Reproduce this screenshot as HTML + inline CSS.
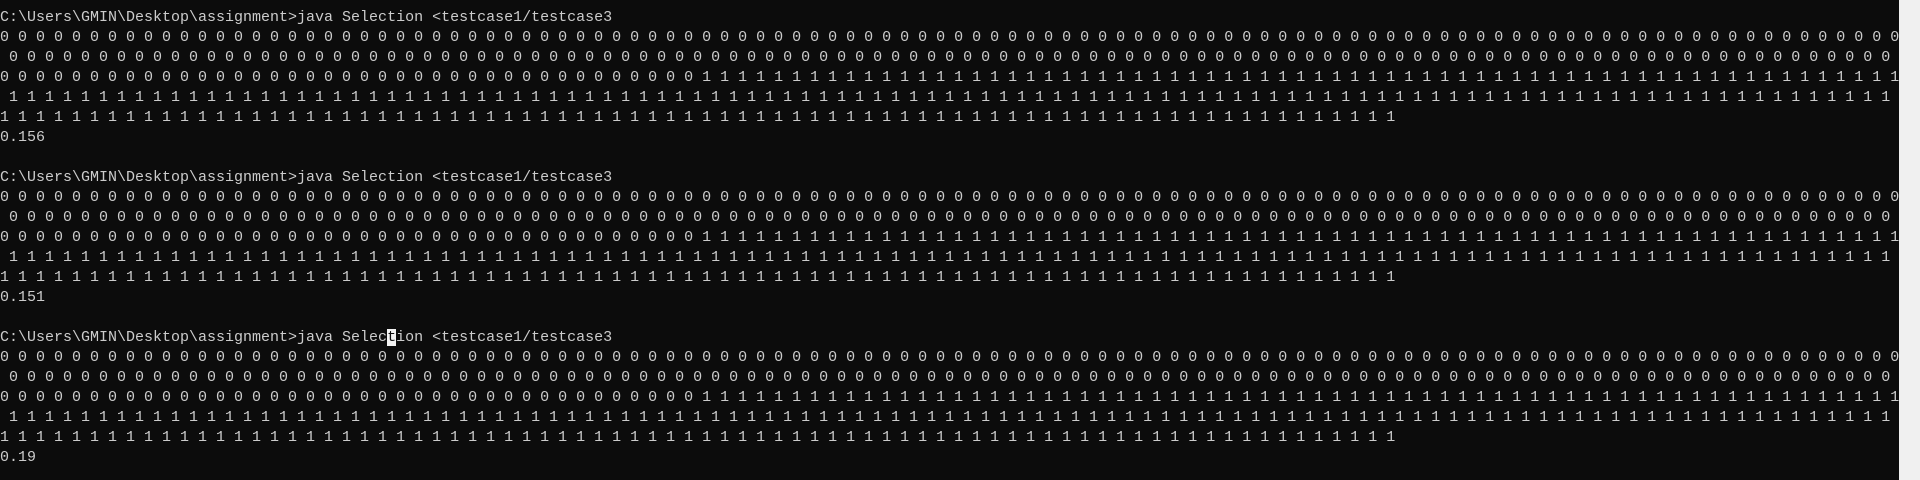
<!DOCTYPE html>
<html><head><meta charset="utf-8"><style>
html,body{margin:0;padding:0;width:1920px;height:480px;overflow:hidden;background:#0c0c0c;}
pre{margin:0;position:absolute;left:0;top:8px;font-family:"Liberation Mono",monospace;font-size:15px;line-height:20px;color:#cccccc;white-space:pre;}
.cur{background:#f2f2f2;color:#0c0c0c;}
.sb{position:absolute;left:1899px;top:0;width:21px;height:480px;background:#f0f0f0;}
</style></head><body>
<pre>C:\Users\GMIN\Desktop\assignment>java Selection &lt;testcase1/testcase3
0 0 0 0 0 0 0 0 0 0 0 0 0 0 0 0 0 0 0 0 0 0 0 0 0 0 0 0 0 0 0 0 0 0 0 0 0 0 0 0 0 0 0 0 0 0 0 0 0 0 0 0 0 0 0 0 0 0 0 0 0 0 0 0 0 0 0 0 0 0 0 0 0 0 0 0 0 0 0 0 0 0 0 0 0 0 0 0 0 0 0 0 0 0 0 0 0 0 0 0 0 0 0 0 0 0
 0 0 0 0 0 0 0 0 0 0 0 0 0 0 0 0 0 0 0 0 0 0 0 0 0 0 0 0 0 0 0 0 0 0 0 0 0 0 0 0 0 0 0 0 0 0 0 0 0 0 0 0 0 0 0 0 0 0 0 0 0 0 0 0 0 0 0 0 0 0 0 0 0 0 0 0 0 0 0 0 0 0 0 0 0 0 0 0 0 0 0 0 0 0 0 0 0 0 0 0 0 0 0 0 0
0 0 0 0 0 0 0 0 0 0 0 0 0 0 0 0 0 0 0 0 0 0 0 0 0 0 0 0 0 0 0 0 0 0 0 0 0 0 0 1 1 1 1 1 1 1 1 1 1 1 1 1 1 1 1 1 1 1 1 1 1 1 1 1 1 1 1 1 1 1 1 1 1 1 1 1 1 1 1 1 1 1 1 1 1 1 1 1 1 1 1 1 1 1 1 1 1 1 1 1 1 1 1 1 1 1
 1 1 1 1 1 1 1 1 1 1 1 1 1 1 1 1 1 1 1 1 1 1 1 1 1 1 1 1 1 1 1 1 1 1 1 1 1 1 1 1 1 1 1 1 1 1 1 1 1 1 1 1 1 1 1 1 1 1 1 1 1 1 1 1 1 1 1 1 1 1 1 1 1 1 1 1 1 1 1 1 1 1 1 1 1 1 1 1 1 1 1 1 1 1 1 1 1 1 1 1 1 1 1 1 1
1 1 1 1 1 1 1 1 1 1 1 1 1 1 1 1 1 1 1 1 1 1 1 1 1 1 1 1 1 1 1 1 1 1 1 1 1 1 1 1 1 1 1 1 1 1 1 1 1 1 1 1 1 1 1 1 1 1 1 1 1 1 1 1 1 1 1 1 1 1 1 1 1 1 1 1 1 1
0.156

C:\Users\GMIN\Desktop\assignment>java Selection &lt;testcase1/testcase3
0 0 0 0 0 0 0 0 0 0 0 0 0 0 0 0 0 0 0 0 0 0 0 0 0 0 0 0 0 0 0 0 0 0 0 0 0 0 0 0 0 0 0 0 0 0 0 0 0 0 0 0 0 0 0 0 0 0 0 0 0 0 0 0 0 0 0 0 0 0 0 0 0 0 0 0 0 0 0 0 0 0 0 0 0 0 0 0 0 0 0 0 0 0 0 0 0 0 0 0 0 0 0 0 0 0
 0 0 0 0 0 0 0 0 0 0 0 0 0 0 0 0 0 0 0 0 0 0 0 0 0 0 0 0 0 0 0 0 0 0 0 0 0 0 0 0 0 0 0 0 0 0 0 0 0 0 0 0 0 0 0 0 0 0 0 0 0 0 0 0 0 0 0 0 0 0 0 0 0 0 0 0 0 0 0 0 0 0 0 0 0 0 0 0 0 0 0 0 0 0 0 0 0 0 0 0 0 0 0 0 0
0 0 0 0 0 0 0 0 0 0 0 0 0 0 0 0 0 0 0 0 0 0 0 0 0 0 0 0 0 0 0 0 0 0 0 0 0 0 0 1 1 1 1 1 1 1 1 1 1 1 1 1 1 1 1 1 1 1 1 1 1 1 1 1 1 1 1 1 1 1 1 1 1 1 1 1 1 1 1 1 1 1 1 1 1 1 1 1 1 1 1 1 1 1 1 1 1 1 1 1 1 1 1 1 1 1
 1 1 1 1 1 1 1 1 1 1 1 1 1 1 1 1 1 1 1 1 1 1 1 1 1 1 1 1 1 1 1 1 1 1 1 1 1 1 1 1 1 1 1 1 1 1 1 1 1 1 1 1 1 1 1 1 1 1 1 1 1 1 1 1 1 1 1 1 1 1 1 1 1 1 1 1 1 1 1 1 1 1 1 1 1 1 1 1 1 1 1 1 1 1 1 1 1 1 1 1 1 1 1 1 1
1 1 1 1 1 1 1 1 1 1 1 1 1 1 1 1 1 1 1 1 1 1 1 1 1 1 1 1 1 1 1 1 1 1 1 1 1 1 1 1 1 1 1 1 1 1 1 1 1 1 1 1 1 1 1 1 1 1 1 1 1 1 1 1 1 1 1 1 1 1 1 1 1 1 1 1 1 1
0.151

C:\Users\GMIN\Desktop\assignment>java Selec<span class="cur">t</span>ion &lt;testcase1/testcase3
0 0 0 0 0 0 0 0 0 0 0 0 0 0 0 0 0 0 0 0 0 0 0 0 0 0 0 0 0 0 0 0 0 0 0 0 0 0 0 0 0 0 0 0 0 0 0 0 0 0 0 0 0 0 0 0 0 0 0 0 0 0 0 0 0 0 0 0 0 0 0 0 0 0 0 0 0 0 0 0 0 0 0 0 0 0 0 0 0 0 0 0 0 0 0 0 0 0 0 0 0 0 0 0 0 0
 0 0 0 0 0 0 0 0 0 0 0 0 0 0 0 0 0 0 0 0 0 0 0 0 0 0 0 0 0 0 0 0 0 0 0 0 0 0 0 0 0 0 0 0 0 0 0 0 0 0 0 0 0 0 0 0 0 0 0 0 0 0 0 0 0 0 0 0 0 0 0 0 0 0 0 0 0 0 0 0 0 0 0 0 0 0 0 0 0 0 0 0 0 0 0 0 0 0 0 0 0 0 0 0 0
0 0 0 0 0 0 0 0 0 0 0 0 0 0 0 0 0 0 0 0 0 0 0 0 0 0 0 0 0 0 0 0 0 0 0 0 0 0 0 1 1 1 1 1 1 1 1 1 1 1 1 1 1 1 1 1 1 1 1 1 1 1 1 1 1 1 1 1 1 1 1 1 1 1 1 1 1 1 1 1 1 1 1 1 1 1 1 1 1 1 1 1 1 1 1 1 1 1 1 1 1 1 1 1 1 1
 1 1 1 1 1 1 1 1 1 1 1 1 1 1 1 1 1 1 1 1 1 1 1 1 1 1 1 1 1 1 1 1 1 1 1 1 1 1 1 1 1 1 1 1 1 1 1 1 1 1 1 1 1 1 1 1 1 1 1 1 1 1 1 1 1 1 1 1 1 1 1 1 1 1 1 1 1 1 1 1 1 1 1 1 1 1 1 1 1 1 1 1 1 1 1 1 1 1 1 1 1 1 1 1 1
1 1 1 1 1 1 1 1 1 1 1 1 1 1 1 1 1 1 1 1 1 1 1 1 1 1 1 1 1 1 1 1 1 1 1 1 1 1 1 1 1 1 1 1 1 1 1 1 1 1 1 1 1 1 1 1 1 1 1 1 1 1 1 1 1 1 1 1 1 1 1 1 1 1 1 1 1 1
0.19</pre>
<div class="sb"></div>
</body></html>
